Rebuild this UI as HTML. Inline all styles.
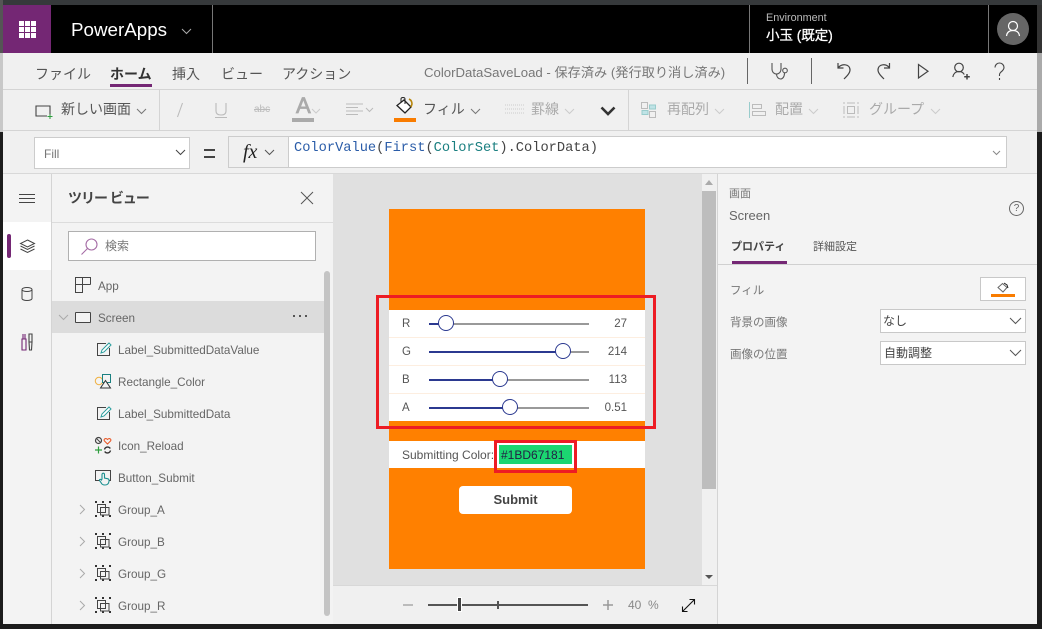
<!DOCTYPE html>
<html lang="ja"><head><meta charset="utf-8"><style>
html,body{margin:0;padding:0;width:1042px;height:629px;overflow:hidden;background:#1c1c1c}
body{position:relative;font-family:"Liberation Sans","Noto Sans CJK JP",sans-serif;color:#555;font-size:12px}
.a{position:absolute;white-space:nowrap}
svg{position:absolute;overflow:visible}
.tb{font-size:14px;color:#555;top:65px;line-height:18px}
.dis{color:#aaa;font-size:14px;line-height:18px;top:100px}
.tree{font-size:11.700px;color:#666;line-height:17px}
.sl{left:389px;width:256px;height:28px;background:#fff}
.track{left:429px;width:160px;height:2px;background:#999}
.fill{left:429px;height:2px;background:#2b3990}
.th{width:14px;height:14px;border:1.500px solid #2b3990;border-radius:50%;background:#fff}
.lab{font-size:11.500px;color:#555;left:402px;line-height:14px}
.val{font-size:11.500px;color:#555;right:415px;line-height:14px}
.pl{font-size:11.500px;color:#777;left:730px;line-height:16px}
.dd{left:880px;width:144px;height:22px;background:#fff;border:1px solid #c8c8c8}
</style></head><body>
<div class="a" style="left:0;top:0;width:1042px;height:5px;background:#36393b"></div>
<div class="a" style="left:0;top:0;width:3px;height:53px;background:#555"></div>
<div class="a" style="left:0;top:53px;width:3px;height:79px;background:#c8c8c8"></div>
<div class="a" style="left:1037px;top:5px;width:5px;height:48px;background:#333"></div>
<div class="a" style="left:1037px;top:53px;width:5px;height:79px;background:#aaa"></div>

<!-- header -->
<div class="a" style="left:3px;top:5px;width:1034px;height:48px;background:#000"></div>
<div class="a" style="left:3px;top:5px;width:48px;height:48px;background:#742774"></div>
<svg style="left:19px;top:21px" width="17" height="17"><g fill="#fff"><rect width="5" height="5"/><rect x="6" width="5" height="5"/><rect x="12" width="5" height="5"/><rect y="6" width="5" height="5"/><rect x="6" y="6" width="5" height="5"/><rect x="12" y="6" width="5" height="5"/><rect y="12" width="5" height="5"/><rect x="6" y="12" width="5" height="5"/><rect x="12" y="12" width="5" height="5"/></g></svg>
<div class="a" style="left:71px;top:18px;font-size:18.800px;line-height:24px;color:#fff">PowerApps</div>
<svg style="left:181px;top:28px" width="11" height="7"><path d="M1 1l4.500 4.500L10 1" fill="none" stroke="#aaa"/></svg>
<div class="a" style="left:212px;top:5px;width:1px;height:48px;background:#777"></div>
<div class="a" style="left:749px;top:5px;width:1px;height:48px;background:#777"></div>
<div class="a" style="left:988px;top:5px;width:1px;height:48px;background:#777"></div>
<div class="a" style="left:766px;top:11px;font-size:10.800px;line-height:14px;color:#bbb">Environment</div>
<div class="a" style="left:766px;top:27px;font-size:13.500px;line-height:17px;color:#fff;-webkit-text-stroke:.3px #fff">小玉 (既定)</div>
<div class="a" style="left:997px;top:13px;width:32px;height:32px;border-radius:50%;background:#666"></div>
<svg style="left:1005px;top:20px" width="16" height="18"><circle cx="8" cy="6" r="4.500" fill="none" stroke="#fff" stroke-width="1.200"/><path d="M1.500 16c.5-4 3-5.500 6.500-5.500s6 1.500 6.500 5.500" fill="none" stroke="#fff" stroke-width="1.200"/></svg>

<!-- ribbon tabs -->
<div class="a" style="left:3px;top:53px;width:1034px;height:79px;background:#f0f0f0"></div>
<div class="a tb" style="left:35px">ファイル</div>
<div class="a tb" style="left:110px;font-weight:bold;color:#333">ホーム</div>
<div class="a" style="left:110px;top:84px;width:42px;height:3px;background:#742774"></div>
<div class="a tb" style="left:172px">挿入</div>
<div class="a tb" style="left:221px">ビュー</div>
<div class="a tb" style="left:282px">アクション</div>
<div class="a" style="left:424px;top:64px;font-size:13.200px;line-height:18px;color:#777">ColorDataSaveLoad - 保存済み (発行取り消し済み)</div>
<div class="a" style="left:747px;top:58px;width:1px;height:26px;background:#666"></div>
<div class="a" style="left:811px;top:58px;width:1px;height:26px;background:#666"></div>
<svg style="left:770px;top:61px" width="20" height="20" fill="none" stroke="#555" stroke-width="1.100"><path d="M2 2v6c0 3 2 5 4.500 5S11 11 11 8V2"/><path d="M6.500 13c0 3 2 5 4 5s4-2 4-6"/><circle cx="15" cy="9.500" r="2.300"/></svg>
<svg style="left:835px;top:60px" width="18" height="20" fill="none" stroke="#444" stroke-width="1.200"><path d="M3 3v5h5.500"/><path d="M3.500 7.500C6 3.500 15 3.500 15 10c0 3-3 6-6 9"/></svg>
<svg style="left:875px;top:60px" width="18" height="20" fill="none" stroke="#444" stroke-width="1.200"><path d="M14.500 3v5H9"/><path d="M14 7.500C12 3.500 3 3.500 3 10c0 3 3 6 6 9"/></svg>
<svg style="left:917px;top:63px" width="12" height="16" fill="none" stroke="#444" stroke-width="1.200"><path d="M1.500 1.500v13.500l9.500-6.800z"/></svg>
<svg style="left:952px;top:62px" width="19" height="18" fill="none" stroke="#444" stroke-width="1.200"><circle cx="7" cy="5.500" r="4.300"/><path d="M.8 15c.5-3 2.500-5.500 6.200-5.500 2.600 0 4.300 1.200 5.300 3"/><path d="M15 12v5.500M12.200 14.700h5.600" stroke-width="1.500"/></svg>
<svg style="left:994px;top:62px" width="11" height="19" fill="none" stroke="#444" stroke-width="1.100"><path d="M1 5.500C1 3 3 1 5.500 1S10 3 10 5.500 8 9 6.500 10.500 5.500 12.500 5.500 14"/><path d="M5.500 16v2"/></svg>
<div class="a" style="left:3px;top:89px;width:1034px;height:1px;background:#d4d4d4"></div>

<!-- ribbon commands -->
<svg style="left:35px;top:105px" width="18" height="14" fill="none"><path d="M15 10V1H1v10h11" stroke="#444" stroke-width="1.100"/><path d="M15 9v5M12.500 11.500h5" stroke="#2e9e3e"/></svg>
<div class="a" style="left:61px;top:100px;font-size:14px;line-height:18px;color:#555">新しい画面</div>
<svg style="left:136px;top:108px" width="11" height="7"><path d="M1 1l4.500 4.500L10 1" fill="none" stroke="#777"/></svg>
<div class="a" style="left:159px;top:90px;width:1px;height:40px;background:#d4d4d4"></div>
<svg style="left:176px;top:102px" width="8" height="16"><path d="M6.500 1L1.500 15" stroke="#bbb" stroke-width="1.100"/></svg>
<svg style="left:215px;top:102px" width="12" height="16" fill="none" stroke="#bbb" stroke-width="1.100"><path d="M1 1v8c0 3 2 4 5 4s5-1 5-4V1M0 15.500h12"/></svg>
<div class="a" style="left:254px;top:103px;font-size:10px;line-height:14px;color:#bbb;text-decoration:line-through">abc</div>
<div class="a" style="left:296px;top:93px;font-size:22px;line-height:26px;color:#aaa;-webkit-text-stroke:.8px #aaa">A</div>
<svg style="left:311px;top:108px" width="10" height="6"><path d="M1 1l4 4 4-4" fill="none" stroke="#ccc"/></svg>
<div class="a" style="left:292px;top:118px;width:22px;height:4px;background:#aaa"></div>
<svg style="left:346px;top:103px" width="28" height="13" fill="none" stroke="#bbb"><path d="M0 1h17M0 4.500h12M0 8h17M0 11.500h12M20 5l3.500 3.500L27 5"/></svg>
<svg style="left:396px;top:96px" width="18" height="19" fill="none"><path d="M8 4l7 7-6 6-8-7.500z" fill="#fff" stroke="#222" stroke-width="1.300"/><path d="M5 6V3c0-2 4-2 4 0v5" stroke="#222"/><path d="M13 3c2 1 3 3 3 5l-1 3" stroke="#b8860b" stroke-width="1.600"/></svg>
<div class="a" style="left:394px;top:118px;width:22px;height:4px;background:#f97c00"></div>
<div class="a" style="left:423px;top:100px;font-size:14px;line-height:18px;color:#555">フィル</div>
<svg style="left:470px;top:108px" width="11" height="7"><path d="M1 1l4.500 4.500L10 1" fill="none" stroke="#777"/></svg>
<svg style="left:505px;top:104px" width="20" height="11" fill="none" stroke="#ccc" stroke-dasharray="1 1"><path d="M0 1h20M0 5h20M0 9h20"/></svg>
<div class="a dis" style="left:531px">罫線</div>
<svg style="left:564px;top:108px" width="11" height="7"><path d="M1 1l4.500 4.500L10 1" fill="none" stroke="#ccc"/></svg>
<svg style="left:600px;top:106px" width="16" height="10"><path d="M1.500 1.500L8 8l6.500-6.500" fill="none" stroke="#333" stroke-width="2.600"/></svg>
<div class="a" style="left:628px;top:90px;width:1px;height:40px;background:#d4d4d4"></div>
<svg style="left:641px;top:102px" width="16" height="16" fill="none" stroke="#bbb"><rect x=".5" y=".5" width="6" height="6"/><rect x="8.500" y="9.500" width="6" height="6"/><rect x="8.500" y="3" width="6" height="4" fill="#bfe3e6" stroke="#9cc"/><rect x="1" y="8.500" width="6" height="4" fill="#bfe3e6" stroke="#9cc"/></svg>
<div class="a dis" style="left:667px">再配列</div>
<svg style="left:714px;top:108px" width="11" height="7"><path d="M1 1l4.500 4.500L10 1" fill="none" stroke="#ccc"/></svg>
<svg style="left:749px;top:102px" width="17" height="16" fill="none" stroke="#bbb"><path d="M.5 0v16" stroke="#9cc"/><rect x="3.500" y="2.500" width="9" height="4"/><rect x="3.500" y="9.500" width="13" height="4"/></svg>
<div class="a dis" style="left:775px">配置</div>
<svg style="left:808px;top:108px" width="11" height="7"><path d="M1 1l4.500 4.500L10 1" fill="none" stroke="#ccc"/></svg>
<svg style="left:843px;top:102px" width="16" height="16" fill="none" stroke="#bbb"><path d="M0 1h2M14 1h2M0 15h2M14 15h2M1 4v8M15 4v8M4 1h8M4 15h8"/><rect x="4.500" y="4.500" width="7" height="7"/></svg>
<div class="a dis" style="left:869px">グループ</div>
<svg style="left:930px;top:108px" width="11" height="7"><path d="M1 1l4.500 4.500L10 1" fill="none" stroke="#ccc"/></svg>
<div class="a" style="left:3px;top:130px;width:1034px;height:1px;background:#d4d4d4"></div>

<!-- formula bar -->
<div class="a" style="left:3px;top:131px;width:1034px;height:43px;background:#f0f0f0"></div>
<div class="a" style="left:34px;top:137px;width:154px;height:30px;background:#fff;border:1px solid #ccc;font-size:12px;line-height:32px;color:#777;text-indent:9px">Fill</div>
<svg style="left:175px;top:149px" width="11" height="7"><path d="M1 1l4.500 4.500L10 1" fill="none" stroke="#444"/></svg>
<div class="a" style="left:204px;top:149px;width:11px;height:2px;background:#444"></div>
<div class="a" style="left:204px;top:156px;width:11px;height:2px;background:#444"></div>
<div class="a" style="left:228px;top:136px;width:59px;height:30px;background:#f0f0f0;border:1px solid #ccc"></div>
<div class="a" style="left:243px;top:140px;font-family:'Liberation Serif',serif;font-style:italic;font-size:20px;line-height:24px;color:#222">fx</div>
<svg style="left:264px;top:149px" width="11" height="7"><path d="M1 1l4.500 4.500L10 1" fill="none" stroke="#555"/></svg>
<div class="a" style="left:288px;top:136px;width:717px;height:30px;background:#fff;border:1px solid #ccc"></div>
<div class="a" style="left:294px;top:140px;font-family:'Liberation Mono',monospace;font-size:13.700px;line-height:17px;color:#444"><span style="color:#2a5ca8">ColorValue</span>(<span style="color:#2a5ca8">First</span>(<span style="color:#1a7f80">ColorSet</span>).ColorData)</div>
<svg style="left:992px;top:150px" width="9" height="6"><path d="M1 1l3.500 3.500L8 1" fill="none" stroke="#888"/></svg>
<div class="a" style="left:3px;top:173px;width:1034px;height:1px;background:#d8d8d8"></div>

<!-- left rail -->
<div class="a" style="left:3px;top:174px;width:48px;height:450px;background:#f3f3f3"></div>
<div class="a" style="left:51px;top:174px;width:1px;height:450px;background:#d4d4d4"></div>
<div class="a" style="left:3px;top:222px;width:48px;height:48px;background:#fff"></div>
<div class="a" style="left:7px;top:234px;width:4px;height:24px;border-radius:2px;background:#742774"></div>
<svg style="left:19px;top:194px" width="16" height="9"><path d="M0 .5h16M0 4.500h16M0 8.500h16" stroke="#444"/></svg>
<svg style="left:20px;top:239px" width="15" height="15" fill="none" stroke="#444"><path d="M7.500 1L14.500 4.500 7.500 8 .5 4.500zM.5 7l7 3.500 7-3.500M.5 10l7 3.500 7-3.500"/></svg>
<svg style="left:21px;top:287px" width="12" height="14" fill="none" stroke="#444"><ellipse cx="6" cy="2.500" rx="5" ry="2"/><path d="M1 2.500v9c0 1 2 2 5 2s5-1 5-2v-9"/></svg>
<svg style="left:21px;top:333px" width="12" height="18" fill="none" stroke-width="1.100"><path d="M2 1v5h2V1M1 6h4v11H1z" stroke="#742774"/><path d="M8 1h3v8H8zM8 9h3l-.5 8h-2z" stroke="#444"/></svg>

<!-- tree panel -->
<div class="a" style="left:52px;top:174px;width:281px;height:450px;background:#f3f3f3"></div>
<div class="a" style="left:68px;top:188px;font-size:14px;letter-spacing:-1px;line-height:21px;font-weight:bold;color:#444">ツリー ビュー</div>
<svg style="left:301px;top:192px" width="12" height="12"><path d="M0 0l12 12M12 0L0 12" stroke="#555"/></svg>
<div class="a" style="left:68px;top:231px;width:246px;height:28px;background:#fff;border:1px solid #b0b0b0"></div>
<svg style="left:81px;top:238px" width="17" height="17" fill="none" stroke="#a56ca5" stroke-width="1.100"><circle cx="10.500" cy="6.500" r="5.500"/><path d="M6.500 10.500L.5 16.500"/></svg>
<div class="a" style="left:105px;top:238px;font-size:12px;line-height:16px;color:#777">検索</div>
<div class="a" style="left:52px;top:222px;width:281px;height:1px;background:#dcdcdc"></div>
<div class="a" style="left:52px;top:301px;width:272px;height:32px;background:#dcdcdc"></div>
<svg style="left:75px;top:277px" width="16" height="16" fill="none" stroke="#444"><path d="M.5 7.500h15M7.500 .5v15H.5v-15h15v7"/></svg>
<div class="a tree" style="left:98px;top:278px">App</div>
<svg style="left:58px;top:314px" width="11" height="7"><path d="M1 1l4.500 4.500L10 1" fill="none" stroke="#aaa"/></svg>
<div class="a" style="left:75px;top:312px;width:14px;height:9px;border:1px solid #444;background:#f3f3f3;border-radius:1px"></div>
<div class="a tree" style="left:98px;top:310px">Screen</div>
<div class="a" style="left:293px;top:315px;width:2px;height:2px;background:#555;box-shadow:6px 0 #555,12px 0 #555"></div>
<svg style="left:97px;top:342px" width="16" height="15" fill="none"><path d="M9 1.500H.5v12h12V6" stroke="#444"/><path d="M4 11l1-3 7-7 2 2-7 7z" fill="#fff" stroke="#2a9d9d"/></svg>
<div class="a tree" style="left:118px;top:342px">Label_SubmittedDataValue</div>
<svg style="left:95px;top:374px" width="17" height="15" fill="none"><circle cx="4" cy="7" r="3.700" stroke="#f0b040"/><rect x="7.500" y=".5" width="8" height="8" stroke="#1a8080"/><path d="M10.500 6.500l5 7.500h-10z" fill="#f3f3f3" stroke="#333"/></svg>
<div class="a tree" style="left:118px;top:374px">Rectangle_Color</div>
<svg style="left:97px;top:406px" width="16" height="15" fill="none"><path d="M9 1.500H.5v12h12V6" stroke="#444"/><path d="M4 11l1-3 7-7 2 2-7 7z" fill="#fff" stroke="#2a9d9d"/></svg>
<div class="a tree" style="left:118px;top:406px">Label_SubmittedData</div>
<svg style="left:95px;top:437px" width="17" height="17" fill="none"><circle cx="3.500" cy="3.500" r="3" stroke="#444" stroke-width="1.200"/><path d="M1.500 1.500l4 4" stroke="#444"/><path d="M12.500 7l-3-3c-1.300-1.500.8-3.500 3-1.500 2.200-2 4.300 0 3 1.500z" stroke="#e85a2a" stroke-width="1.100"/><path d="M3.500 9.500v7M0 13h7" stroke="#2e9e3e" stroke-width="1.200"/><path d="M9.500 12.500a3.200 3.200 0 015.800-1M15.500 13.500a3.200 3.200 0 01-5.800 1" stroke="#333" stroke-width="1.400"/></svg>
<div class="a tree" style="left:118px;top:438px">Icon_Reload</div>
<svg style="left:95px;top:470px" width="17" height="16" fill="none"><path d="M6 10.500H.5V.5h15v10h-1.500" stroke="#444"/><path d="M7 9V4.500c0-1.800 2.500-1.800 2.500 0V8l3.500.8c1.200.4 1.300 1.300.9 3-.4 2.200-1.800 3.200-3.900 3.200-2.300 0-3.500-1-4-2.500L4.500 10.500c-.4-1 1-1.700 2-.5z" fill="#f3f3f3" stroke="#1a9090" stroke-width="1.100"/></svg>
<div class="a tree" style="left:118px;top:470px">Button_Submit</div>
<div class="a tree" style="left:118px;top:502px">Group_A</div>
<div class="a tree" style="left:118px;top:534px">Group_B</div>
<div class="a tree" style="left:118px;top:566px">Group_G</div>
<div class="a tree" style="left:118px;top:598px">Group_R</div>
<svg style="left:79px;top:504px" width="7" height="11"><path d="M1 1l4.500 4.500L1 10" fill="none" stroke="#aaa"/></svg>
<svg style="left:79px;top:536px" width="7" height="11"><path d="M1 1l4.500 4.500L1 10" fill="none" stroke="#aaa"/></svg>
<svg style="left:79px;top:568px" width="7" height="11"><path d="M1 1l4.500 4.500L1 10" fill="none" stroke="#aaa"/></svg>
<svg style="left:79px;top:600px" width="7" height="11"><path d="M1 1l4.500 4.500L1 10" fill="none" stroke="#aaa"/></svg>
<svg style="left:95px;top:501px" width="16" height="16" fill="none" stroke="#444"><g fill="#333" stroke="none"><rect width="2" height="2"/><rect x="7" width="2" height="2"/><rect x="14" width="2" height="2"/><rect y="14" width="2" height="2"/><rect x="7" y="14" width="2" height="2"/><rect x="14" y="14" width="2" height="2"/></g><path d="M2.500 3v8.500h8V3.500H2.500M5.500 6.500h8.500v7.500H5.500z"/></svg>
<svg style="left:95px;top:533px" width="16" height="16" fill="none" stroke="#444"><g fill="#333" stroke="none"><rect width="2" height="2"/><rect x="7" width="2" height="2"/><rect x="14" width="2" height="2"/><rect y="14" width="2" height="2"/><rect x="7" y="14" width="2" height="2"/><rect x="14" y="14" width="2" height="2"/></g><path d="M2.500 3v8.500h8V3.500H2.500M5.500 6.500h8.500v7.500H5.500z"/></svg>
<svg style="left:95px;top:565px" width="16" height="16" fill="none" stroke="#444"><g fill="#333" stroke="none"><rect width="2" height="2"/><rect x="7" width="2" height="2"/><rect x="14" width="2" height="2"/><rect y="14" width="2" height="2"/><rect x="7" y="14" width="2" height="2"/><rect x="14" y="14" width="2" height="2"/></g><path d="M2.500 3v8.500h8V3.500H2.500M5.500 6.500h8.500v7.500H5.500z"/></svg>
<svg style="left:95px;top:597px" width="16" height="16" fill="none" stroke="#444"><g fill="#333" stroke="none"><rect width="2" height="2"/><rect x="7" width="2" height="2"/><rect x="14" width="2" height="2"/><rect y="14" width="2" height="2"/><rect x="7" y="14" width="2" height="2"/><rect x="14" y="14" width="2" height="2"/></g><path d="M2.500 3v8.500h8V3.500H2.500M5.500 6.500h8.500v7.500H5.500z"/></svg>
<div class="a" style="left:324px;top:271px;width:6px;height:345px;border-radius:3px;background:#c4c4c4"></div>

<!-- canvas -->
<div class="a" style="left:333px;top:174px;width:384px;height:411px;background:#e0e0e0"></div>
<div class="a" style="left:702px;top:174px;width:15px;height:411px;background:#f0f0f0"></div>
<div class="a" style="left:702px;top:191px;width:14px;height:298px;background:#bdbdbd"></div>
<svg style="left:705px;top:180px" width="8" height="5"><path d="M0 5l4-5 4 5z" fill="#aaa"/></svg>
<svg style="left:705px;top:575px" width="8" height="5"><path d="M0 0l4 4 4-4z" fill="#555"/></svg>
<div class="a" style="left:389px;top:209px;width:256px;height:360px;background:#ff8000"></div>
<div class="a sl" style="top:310px"></div>
<div class="a sl" style="top:338px"></div>
<div class="a sl" style="top:366px"></div>
<div class="a sl" style="top:394px;height:27px"></div>
<div class="a" style="left:389px;top:337px;width:256px;height:1px;background:#fdeee0"></div>
<div class="a" style="left:389px;top:365px;width:256px;height:1px;background:#fdeee0"></div>
<div class="a" style="left:389px;top:393px;width:256px;height:1px;background:#fdeee0"></div>
<div class="a lab" style="top:317px">R</div><div class="a lab" style="top:345px">G</div><div class="a lab" style="top:373px">B</div><div class="a lab" style="top:401px">A</div>
<div class="a track" style="top:323px"></div><div class="a track" style="top:351px"></div><div class="a track" style="top:379px"></div><div class="a track" style="top:407px"></div>
<div class="a fill" style="top:323px;width:17px"></div>
<div class="a fill" style="top:351px;width:134px"></div>
<div class="a fill" style="top:379px;width:71px"></div>
<div class="a fill" style="top:407px;width:81px"></div>
<div class="a th" style="left:438px;top:315px"></div>
<div class="a th" style="left:555px;top:343px"></div>
<div class="a th" style="left:492px;top:371px"></div>
<div class="a th" style="left:502px;top:399px"></div>
<div class="a val" style="top:317px">27</div><div class="a val" style="top:345px">214</div><div class="a val" style="top:373px">113</div><div class="a val" style="top:401px">0.51</div>
<div class="a" style="left:389px;top:441px;width:256px;height:27px;background:#fff"></div>
<div class="a" style="left:402px;top:448px;font-size:12px;line-height:14px;color:#555">Submitting Color:</div>
<div class="a" style="left:499px;top:445px;width:73px;height:19px;background:#1bd671;font-size:12px;line-height:21px;color:#224;text-indent:2px">#1BD67181</div>
<div class="a" style="left:376px;top:295px;width:274px;height:128px;border:3px solid #ed1c24"></div>
<div class="a" style="left:494px;top:440px;width:77px;height:27px;border:3px solid #ed1c24"></div>
<div class="a" style="left:459px;top:486px;width:113px;height:28px;background:#fff;border-radius:4px;font-size:13px;font-weight:bold;line-height:28px;text-align:center;color:#444">Submit</div>

<!-- zoom bar -->
<div class="a" style="left:333px;top:585px;width:384px;height:39px;background:#f0f0f0;border-top:1px solid #d8d8d8;box-sizing:border-box"></div>
<div class="a" style="left:403px;top:604px;width:10px;height:2px;background:#bbb"></div>
<div class="a" style="left:428px;top:604px;width:160px;height:2px;background:#555"></div>
<div class="a" style="left:458px;top:598px;width:3px;height:13px;background:#444;outline:1px solid #fff"></div>
<div class="a" style="left:497px;top:601px;width:2px;height:8px;background:#555"></div>
<svg style="left:603px;top:600px" width="10" height="10"><path d="M5 0v10M0 5h10" stroke="#999" stroke-width="1.500"/></svg>
<div class="a" style="left:628px;top:598px;font-size:12px;line-height:14px;color:#888">40</div>
<div class="a" style="left:648px;top:598px;font-size:12px;line-height:14px;color:#888">%</div>
<svg style="left:682px;top:599px" width="13" height="13" fill="none" stroke="#111" stroke-width="1.100"><path d="M.5 12.500l12-12M7.500.5h5v5M.5 7.500v5h5"/></svg>

<!-- property panel -->
<div class="a" style="left:717px;top:174px;width:320px;height:450px;background:#f3f3f3;border-left:1px solid #d4d4d4;box-sizing:border-box"></div>
<div class="a" style="left:729px;top:187px;font-size:11px;line-height:15px;color:#777">画面</div>
<div class="a" style="left:729px;top:207px;font-size:13px;line-height:17px;color:#666">Screen</div>
<div class="a" style="left:1009px;top:201px;width:13px;height:13px;border:1px solid #666;border-radius:50%;font-size:10px;line-height:13px;text-align:center;color:#666">?</div>
<div class="a" style="left:731px;top:239px;font-size:11px;line-height:16px;font-weight:bold;color:#444">プロパティ</div>
<div class="a" style="left:813px;top:239px;font-size:11px;line-height:16px;color:#555">詳細設定</div>
<div class="a" style="left:732px;top:261px;width:55px;height:3px;background:#742774"></div>
<div class="a" style="left:718px;top:264px;width:319px;height:1px;background:#d0d0d0"></div>
<div class="a pl" style="top:283px">フィル</div>
<div class="a pl" style="top:315px">背景の画像</div>
<div class="a pl" style="top:347px">画像の位置</div>
<div class="a" style="left:980px;top:277px;width:44px;height:22px;background:#fff;border:1px solid #c8c8c8"></div>
<svg style="left:997px;top:282px" width="12" height="11"><path d="M5.500 1.500l4.500 4-4 4.500-5-4.500z" fill="#fff" stroke="#666"/><path d="M7 1l3 2 1 3" fill="none" stroke="#222"/></svg>
<div class="a" style="left:991px;top:294px;width:24px;height:3px;background:#f97c00"></div>
<div class="a dd" style="top:309px"></div>
<div class="a dd" style="top:341px"></div>
<div class="a" style="left:883px;top:313px;font-size:12px;line-height:16px;color:#444">なし</div>
<div class="a" style="left:884px;top:345px;font-size:12px;line-height:16px;color:#444">自動調整</div>
<svg style="left:1009px;top:317px" width="13" height="8"><path d="M1 1l5.500 5.500L12 1" fill="none" stroke="#555"/></svg>
<svg style="left:1009px;top:349px" width="13" height="8"><path d="M1 1l5.500 5.500L12 1" fill="none" stroke="#555"/></svg>
</body></html>
